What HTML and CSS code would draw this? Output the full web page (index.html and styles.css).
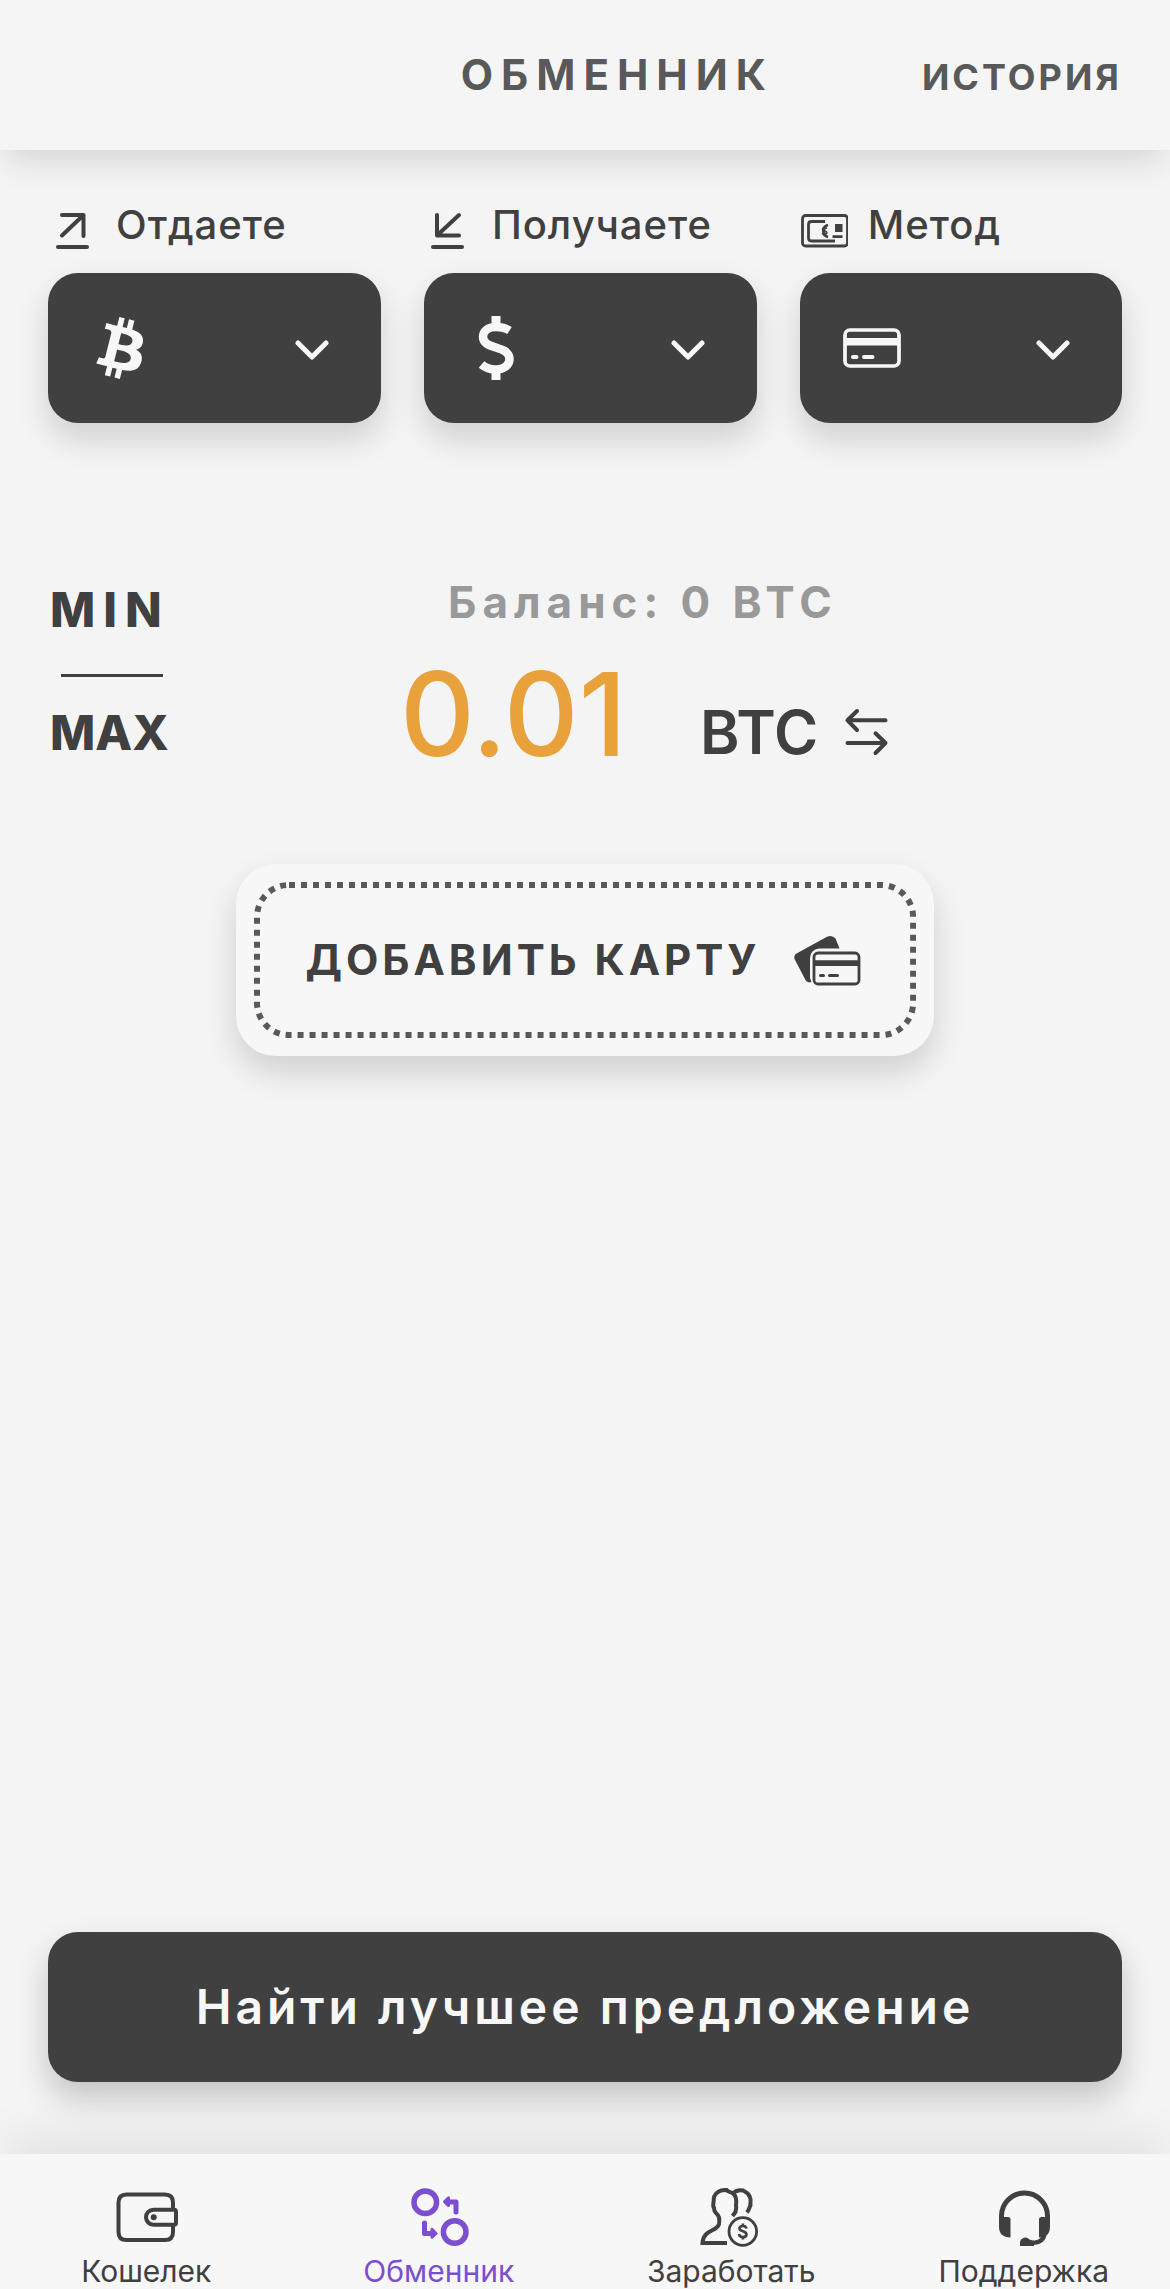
FILE: index.html
```html
<!DOCTYPE html>
<html lang="ru">
<head>
<meta charset="utf-8">
<meta name="viewport" content="width=device-width, initial-scale=1">
<title>Обменник</title>
<link rel="stylesheet" href="styles.css">
</head>
<body>
<header class="header">
  <h1 class="header-title">ОБМЕННИК</h1>
  <a class="header-link" href="#history">ИСТОРИЯ</a>
</header>

<main class="main">
  <div class="selectors">
    <div class="field">
      <label class="field-label" for="give">
        <svg class="label-icon line" viewBox="0 0 48 48" aria-hidden="true"><path d="M14 14H35.500V35M35 14.500L14 34.500M10 46H39"/></svg>
        Отдаете
      </label>
      <div class="select">
        <select class="select-control" id="give"><option value="btc" aria-label="BTC"></option></select>
        <svg class="select-icon" viewBox="5.500 5.700 20.600 20.600" aria-hidden="true"><path fill="currentColor" d="M23.189 14.02c.314-2.096-1.283-3.223-3.465-3.975l.708-2.84-1.728-.43-.69 2.765c-.454-.114-.92-.22-1.385-.326l.695-2.783L15.596 6l-.708 2.839c-.376-.086-.746-.17-1.104-.26l.002-.009-2.384-.595-.46 1.846s1.283.294 1.256.312c.7.175.826.638.805 1.006l-.806 3.235c.048.012.11.03.18.057l-.183-.045-1.13 4.532c-.086.212-.303.531-.793.41.018.025-1.256-.313-1.256-.313l-.858 1.978 2.25.561c.418.105.828.215 1.231.318l-.715 2.872 1.727.43.708-2.84c.472.127.93.245 1.378.357l-.706 2.828 1.728.43.715-2.866c2.948.558 5.164.333 6.097-2.333.752-2.146-.037-3.385-1.588-4.192 1.13-.26 1.98-1.003 2.207-2.538zm-3.95 5.538c-.533 2.147-4.148.986-5.32.695l.95-3.805c1.172.293 4.929.872 4.37 3.11zm.535-5.569c-.487 1.953-3.495.96-4.47.717l.86-3.45c.975.243 4.118.696 3.61 2.733z"/></svg>
        <svg class="chevron" viewBox="0 0 34 20" aria-hidden="true"><path d="M3 3L17 17L31 3"/></svg>
      </div>
    </div>

    <div class="field">
      <label class="field-label" for="get">
        <svg class="label-icon line" viewBox="0 0 48 48" aria-hidden="true"><path d="M13 14V34.500H35M13.500 34L35 14M9 46H38"/></svg>
        Получаете
      </label>
      <div class="select">
        <select class="select-control" id="get"><option value="usd" aria-label="USD"></option></select>
        <svg class="select-icon" viewBox="0 0 64 64" aria-hidden="true"><path fill="none" stroke="currentColor" stroke-width="8.500" d="M45.500 14.500C42 12.300 37 11 32 11C24 11 19 15 19 21C19 34 45.500 29 45.500 43C45.500 49 40 53.500 32 53.500C26 53.500 21 51.500 17.500 48.500"/><path fill="currentColor" d="M27.500 0h9v10h-9zM27.500 54h9v10h-9z"/></svg>
        <svg class="chevron" viewBox="0 0 34 20" aria-hidden="true"><path d="M3 3L17 17L31 3"/></svg>
      </div>
    </div>

    <div class="field">
      <label class="field-label" for="method">
        <svg class="label-icon" viewBox="0 0 48 48" aria-hidden="true">
          <g fill="none" stroke="currentColor" stroke-width="2.800"><rect x="2.500" y="14.500" width="45" height="30.500" rx="3"/><path d="M25 20.500H11.500Q8.500 20.500 8.500 23.500V37Q8.500 40 11.500 40H35M28 24A6.200 6.200 0 0 0 28 36M32.500 35.700H42.500"/><path stroke-width="1.500" d="M27 27.500C25 26 22.500 27 22.500 28.300C22.500 30.500 27 29.500 27 31.800C27 33.500 23.500 34 22 32.500M24.700 25.500V35"/></g>
          <path fill="currentColor" d="M35 23h7.500v8H35z"/>
        </svg>
        Метод
      </label>
      <div class="select">
        <select class="select-control" id="method"><option value="card" aria-label="Карта"></option></select>
        <svg class="select-icon" viewBox="0 0 64 64" aria-hidden="true"><rect x="5" y="14" width="54" height="36" rx="5" fill="none" stroke="currentColor" stroke-width="3.700"/><path fill="currentColor" d="M5 22h54v7.500H5z"/><path stroke="currentColor" stroke-width="4" stroke-linecap="round" d="M13 41h3.500M24 41h8.500"/></svg>
        <svg class="chevron" viewBox="0 0 34 20" aria-hidden="true"><path d="M3 3L17 17L31 3"/></svg>
      </div>
    </div>
  </div>

  <section class="exchange">
    <div class="limits">
      <button class="limit limit-min" type="button">MIN</button>
      <hr class="limits-line">
      <button class="limit" type="button">MAX</button>
    </div>
    <div class="amount">
      <label class="balance" for="amount">Баланс: 0 BTC</label>
      <div class="amount-row">
        <input class="amount-input" id="amount" type="text" inputmode="decimal" value="0.01">
        <button class="currency" type="button">BTC
          <svg class="swap-icon" viewBox="0 0 48 48" aria-hidden="true"><path d="M43.500 12.300H5.500M15 3L5.500 12.300L15 22M5.500 35H43.500M33.500 25.300L43.500 35L33.500 45"/></svg>
        </button>
      </div>
    </div>
  </section>

  <button class="add-card" type="button">
    <svg class="add-card-frame" aria-hidden="true"><rect class="add-card-dots" x="3" y="3" rx="32"/></svg>
    <span>ДОБАВИТЬ КАРТУ</span>
    <svg class="cards-icon" viewBox="0 0 72 56" aria-hidden="true">
      <path fill="currentColor" d="M2.500 27Q1.500 23.500 4.500 21.500L35 4.800Q40 2.500 43.500 6.500L47.500 16.500H27Q18.500 17.500 18 26V46L19.500 50Q15.500 51.500 13.500 48Z"/>
      <rect x="22" y="21" width="45" height="31" rx="4" fill="none" stroke="currentColor" stroke-width="2.800"/>
      <path fill="currentColor" d="M22 28.300h45V34H22z"/>
      <path stroke="currentColor" stroke-width="3" stroke-linecap="round" d="M28.500 43.500h3M37.500 43.500h8"/>
    </svg>
  </button>

  <button class="submit" type="button">Найти лучшее предложение</button>
</main>

<nav class="nav">
  <a class="nav-item" href="#wallet">
    <svg class="nav-icon" viewBox="0 0 64 64" aria-hidden="true"><g fill="none" stroke="currentColor" stroke-width="4"><path d="M59 24V16.500Q59 8.500 51 8.500H12.500Q4.500 8.500 4.500 16.500V46Q4.500 54 12.500 54H51Q59 54 59 46V39"/><path d="M39.500 23.700H60Q62 23.700 62 25.700V36.700Q62 38.700 60 38.700H39.500A7.500 7.500 0 0 1 39.500 23.700Z"/></g><circle cx="39.700" cy="31.200" r="3" fill="currentColor"/></svg>
    Кошелек
  </a>
  <a class="nav-item nav-item-active" href="#exchange" aria-current="page">
    <svg class="nav-icon" viewBox="0 0 64 64" aria-hidden="true"><g fill="none" stroke="currentColor" stroke-width="5.500"><circle cx="18.300" cy="16.300" r="11.300"/><circle cx="47.700" cy="46" r="11.300"/><path stroke-width="5" stroke-linecap="round" stroke-linejoin="round" d="M49 26V16H42M17.500 37V47.500H24"/></g><path fill="currentColor" stroke="currentColor" stroke-width="3" stroke-linejoin="round" d="M37.500 15.700L41.500 11.800V19.600ZM29 47.500L25 43.300V51.200Z"/></svg>
    Обменник
  </a>
  <a class="nav-item" href="#earn">
    <svg class="nav-icon" viewBox="0 0 64 64" aria-hidden="true"><g fill="none" stroke="currentColor" stroke-width="4"><path d="M28 57H3.500C4.500 43 18 46 20 38C21 33 19.500 29 17 27C15.500 25.500 15 24 15 22C13.500 20 14.200 18 14.700 15C14 8 20 3.500 27.500 4C28.500 6 32 5.500 34 7.500C38 10 37.500 16 37 20C38 22 36.500 24 36.500 26L33.500 30"/><path d="M33.500 8C37 4 41 4 44 4.500C46 6 50 6.500 51 11.500C52.500 14 51 17 51.500 19C50.500 22 50 24 48 26.500"/><circle cx="43.800" cy="45.500" r="13.800" stroke-width="2.800"/><path stroke-width="2.600" d="M47.500 42.500C46.500 38.800 40 39.500 40.500 42.800C41 46 47.500 44.500 47.500 48.500C47 52.300 40.500 51.800 40 48M43.900 37.500V40.500M43.900 50.500V53.500"/></g></svg>
    Заработать
  </a>
  <a class="nav-item" href="#support">
    <svg class="nav-icon" viewBox="0 0 64 64" aria-hidden="true"><path fill="none" stroke="currentColor" stroke-width="5" d="M9.500 38V30a23 23 0 0 1 46 0V38"/><path fill="currentColor" d="M7 31H16Q18.500 31 18.500 33.500V51.500Q7 51 7 41ZM58 31H49.500Q47 31 47 33.500V51.500Q58 51 58 41Z"/><path fill="none" stroke="currentColor" stroke-width="4.500" d="M52.500 48C51 56 45 57 37 57"/><path fill="currentColor" d="M28 60V55.500A5.500 5.500 0 0 1 37.500 53.500L42 55V60Z"/></svg>
    Поддержка
  </a>
</nav>
</body>
</html>
```
FILE: styles.css
```css
:root {
  --page: #f4f4f4;
  --surface: #f7f7f7;
  --ink: #404040;
  --ink-soft: #595959;
  --muted: #999999;
  --amount: #e9a23b;
  --accent: #7b4fcf;
  --shadow: 0 16px 32px rgba(0, 0, 0, 0.15);
}

* {
  box-sizing: border-box;
}

body {
  margin: 0;
  min-height: 100vh;
  display: flex;
  flex-direction: column;
  background: var(--page);
  color: var(--ink);
  font-family: Inter, "Liberation Sans", sans-serif;
}

button,
input,
select {
  margin: 0;
  padding: 0;
  border: 0;
  background: none;
  color: inherit;
  font: inherit;
}

svg {
  display: block;
  flex: none;
}

.header {
  display: flex;
  align-items: baseline;
  justify-content: flex-end;
  gap: 148px;
  padding: 51px 48px 49px;
  background: #f5f5f5;
  box-shadow: 0 16px 32px -8px rgba(40, 40, 60, 0.16);
}

.header-title,
.header-link {
  margin: 0;
  color: var(--ink-soft);
  font-weight: 700;
  line-height: 48px;
}

.header-title {
  font-size: 42px;
  letter-spacing: 8px;
}

.header-link {
  font-size: 36px;
  letter-spacing: 3px;
  text-decoration: none;
}

.main {
  flex: 1;
  display: flex;
  flex-direction: column;
  padding: 51px 48px 72px;
}

.selectors {
  display: grid;
  grid-template-columns: 31fr 31fr 30fr;
  gap: 43px;
}

.field {
  display: flex;
  flex-direction: column;
  gap: 24px;
}

.field-label {
  display: flex;
  align-items: center;
  gap: 20px;
  font-size: 40px;
  font-weight: 500;
  letter-spacing: 1px;
  line-height: 48px;
}

.label-icon {
  width: 48px;
  height: 48px;
}

.line {
  fill: none;
  stroke: currentColor;
  stroke-width: 4;
  stroke-linecap: round;
  stroke-linejoin: round;
}

.select {
  display: grid;
  grid-template-columns: auto auto;
  justify-content: space-between;
  align-items: center;
  height: 150px;
  padding: 0 52px 0 40px;
  border-radius: 30px;
  background: var(--ink);
  box-shadow: var(--shadow);
  color: var(--surface);
  position: relative;
}

.select-control {
  position: absolute;
  inset: 0;
  width: 100%;
  height: 100%;
  border-radius: 30px;
  appearance: none;
}

.select-icon {
  width: 64px;
  height: 64px;
  pointer-events: none;
}

.chevron {
  width: 34px;
  height: 20px;
  margin-top: 4px;
  fill: none;
  stroke: currentColor;
  stroke-width: 5;
  stroke-linecap: round;
  stroke-linejoin: round;
  pointer-events: none;
}

.exchange {
  display: flex;
  gap: 220px;
  margin-top: 153px;
}

.limits {
  display: flex;
  flex-direction: column;
  align-items: flex-start;
  width: 132px;
  padding: 6px 0 0 2px;
}

.limit {
  font-size: 48px;
  font-weight: 800;
  line-height: 56px;
}

.limit-min {
  letter-spacing: 8px;
}

.limits-line {
  width: 102px;
  height: 3px;
  margin: 36px 11px 28px;
  border: 0;
  background: var(--ink);
}

.amount {
  display: flex;
  flex-direction: column;
  gap: 26px;
}

.balance {
  padding-left: 48px;
  color: var(--muted);
  font-size: 44px;
  font-weight: 700;
  letter-spacing: 6px;
  line-height: 52px;
}

.amount-row {
  display: flex;
  align-items: flex-end;
  gap: 40px;
}

.amount-input {
  width: 260px;
  height: 120px;
  color: var(--amount);
  font-size: 116px;
  font-weight: 500;
  line-height: 120px;
}

.currency {
  display: flex;
  align-items: center;
  gap: 24px;
  padding-bottom: 6px;
  font-size: 60px;
  font-weight: 600;
  line-height: 72px;
}

.swap-icon {
  width: 48px;
  height: 48px;
  fill: none;
  stroke: currentColor;
  stroke-width: 4;
  stroke-linecap: round;
  stroke-linejoin: round;
}

.add-card {
  position: relative;
  display: flex;
  align-items: center;
  justify-content: center;
  align-self: center;
  gap: 32px;
  width: 65%;
  height: 192px;
  margin-top: 90px;
  border-radius: 40px;
  background: var(--surface);
  box-shadow: var(--shadow);
  font-size: 42px;
  font-weight: 700;
  letter-spacing: 4px;
  line-height: 48px;
}

.add-card-frame {
  position: absolute;
  inset: 18px;
  width: calc(100% - 36px);
  height: calc(100% - 36px);
}

.add-card-dots {
  width: calc(100% - 6px);
  height: calc(100% - 6px);
  fill: none;
  stroke: var(--ink-soft);
  stroke-width: 6;
  stroke-dasharray: 6 6;
}

.cards-icon {
  width: 72px;
  height: 56px;
}

.submit {
  height: 150px;
  margin-top: auto;
  border-radius: 30px;
  background: var(--ink);
  box-shadow: 0 16px 32px rgba(0, 0, 0, 0.2);
  color: var(--surface);
  font-size: 48px;
  font-weight: 600;
  letter-spacing: 4px;
  line-height: 56px;
}

.nav {
  display: grid;
  grid-template-columns: repeat(4, 1fr);
  padding: 32px 0 4px;
  background: var(--surface);
  box-shadow: 0 -24px 48px -8px rgba(0, 0, 0, 0.08);
}

.nav-item {
  display: flex;
  flex-direction: column;
  align-items: center;
  gap: 7px;
  color: var(--ink);
  font-size: 30px;
  line-height: 28px;
  text-decoration: none;
}

.nav-item-active {
  color: var(--accent);
}

.nav-icon {
  width: 64px;
  height: 64px;
}
```
